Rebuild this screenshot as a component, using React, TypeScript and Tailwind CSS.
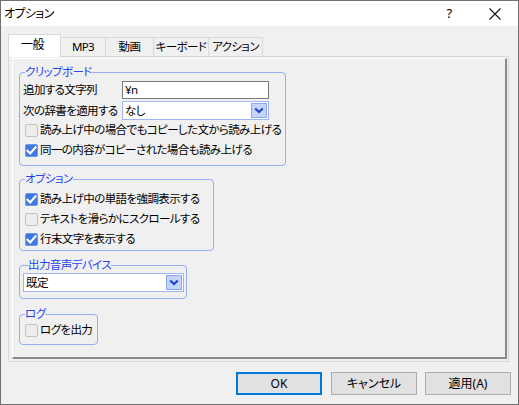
import React from "react";

const FONT = '"Noto Sans", "Noto Sans CJK JP", sans-serif';

function Check({ checked }: { checked?: boolean }) {
  if (checked) {
    return (
      <div className="w-[13px] h-[13px] rounded-[2px] bg-[#3f78e0] border border-[#6d98e8] flex items-center justify-center shrink-0">
        <svg width="11" height="11" viewBox="0 0 11 11">
          <path d="M1.5 5.8 L4.2 8.5 L9.6 2.2" fill="none" stroke="#ffffff" strokeWidth="2.2" strokeLinecap="square" />
        </svg>
      </div>
    );
  }
  return <div className="w-[13px] h-[13px] rounded-[2px] bg-[#ececec] border border-[#c3c3c3] shrink-0" />;
}

function CheckRow({ checked, label, h = "h-[20px]" }: { checked?: boolean; label: string; h?: string }) {
  return (
    <div className={`flex items-center gap-[2px] pl-[5px] ${h}`}>
      <Check checked={checked} />
      <span className="leading-[14px] whitespace-nowrap">{label}</span>
    </div>
  );
}

function Combo({ value, w }: { value: string; w: string }) {
  return (
    <div className={`${w} h-[19px] bg-white border border-[#9fb5f4] flex items-center pl-[2px] pr-[1px]`}>
      <span className="flex-1 leading-[14px]">{value}</span>
      <div className="w-[16px] h-[15px] bg-[#c4d5fb] border border-[#8ea8f0] flex items-center justify-center">
        <svg width="10" height="7" viewBox="0 0 10 7">
          <path d="M1.2 1.5 L5 5 L8.8 1.5" fill="none" stroke="#2343d0" strokeWidth="2.2" />
        </svg>
      </div>
    </div>
  );
}

function Group({ title, w, className = "", children }: { title: string; w: string; className?: string; children: React.ReactNode }) {
  return (
    <fieldset className={`${w} min-w-0 border border-[#95adf2] rounded-[4px] ${className}`}>
      <legend className="ml-[5px] px-0 text-[#2444f2] leading-[14px] whitespace-nowrap">{title}</legend>
      {children}
    </fieldset>
  );
}

export default function App() {
  return (
    <div
      className="w-[519px] h-[405px] border border-[#707070] bg-[#f0f0f0] flex flex-col text-[11.5px] tracking-[-0.6px] text-black overflow-hidden [font-feature-settings:'palt']"
      style={{ fontFamily: FONT }}
    >
      {/* Title bar */}
      <div className="h-[25px] bg-white flex items-center shrink-0">
        <span className="flex-1 pl-[3px] leading-[14px] text-[12px]">オプション</span>
        <div className="w-[46px] h-full flex items-center justify-center text-[13px]">?</div>
        <div className="w-[46px] h-full flex items-center justify-center">
          <svg width="12" height="12" viewBox="0 0 12 12">
            <path d="M0.5 0.5 L11.5 11.5 M11.5 0.5 L0.5 11.5" stroke="#111" strokeWidth="1.1" />
          </svg>
        </div>
      </div>

      {/* Body */}
      <div className="flex-1 flex flex-col px-[7px] pt-[8px]">
        {/* Tabs */}
        <div className="flex items-end h-[22px] whitespace-nowrap text-[11.5px]">
          <div className="w-[53px] h-[23px] -mb-[1px] relative z-10 bg-white border border-b-0 border-[#d9d9d9] flex items-center justify-center pb-[2px] pr-[4px] text-[12px]">
            一般
          </div>
          <div className="w-[45px] h-[19px] border-t border-r border-[#d9d9d9] bg-[#f0f0f0] flex items-center justify-center">MP3</div>
          <div className="w-[48px] h-[19px] border-t border-r border-[#d9d9d9] bg-[#f0f0f0] flex items-center justify-center">動画</div>
          <div className="w-[55px] h-[19px] border-t border-r border-[#d9d9d9] bg-[#f0f0f0] flex items-center justify-center">キーボード</div>
          <div className="w-[54px] h-[19px] border-t border-r border-[#d9d9d9] bg-[#f0f0f0] flex items-center justify-center">アクション</div>
        </div>

        {/* Panel */}
        <div className="w-[501px] h-[306px] border border-[#d9d9d9] pl-[3px] pt-[1px] pr-[1px] pb-[2px] flex">
          <div className="flex-1 border-l border-t border-white border-r-2 border-b-2 border-r-[#8a8a8a] border-b-[#8a8a8a] pl-[6px] pt-[6px] flex flex-col items-start">
            <Group title="クリップボード" w="w-[267px]" className="pt-[2px] pb-[5px]">
              <div className="flex items-center h-[18px] pl-[3px]">
                <span className="w-[99px] leading-[14px] whitespace-nowrap">追加する文字列</span>
                <div className="w-[147px] h-[18px] bg-white border border-[#7a7a7a] flex items-center pl-[2px] leading-[14px]">¥n</div>
              </div>
              <div className="flex items-center h-[19px] mt-[2px] pl-[3px]">
                <span className="w-[99px] leading-[14px] whitespace-nowrap">次の辞書を適用する</span>
                <Combo value="なし" w="w-[147px]" />
              </div>
              <CheckRow label="読み上げ中の場合でもコピーした文から読み上げる" />
              <CheckRow checked label="同一の内容がコピーされた場合も読み上げる" />
            </Group>

            <Group title="オプション" w="w-[195px]" className="mt-[6px] pt-[3px] pb-[1px]">
              <CheckRow checked label="読み上げ中の単語を強調表示する" />
              <CheckRow label="テキストを滑らかにスクロールする" />
              <CheckRow checked label="行末文字を表示する" />
            </Group>

            <Group title="出力音声デバイス" w="w-[168px]" className="mt-[7px] pt-[1px] pb-[6px] pl-[3px]">
              <Combo value="既定" w="w-[161px]" />
            </Group>

            <Group title="ログ" w="w-[79px]" className="mt-[8px] pb-[5px]">
              <CheckRow label="ログを出力" h="h-[18px]" />
            </Group>
          </div>
        </div>

        {/* Buttons */}
        <div className="flex justify-end mt-[10px] text-[12px] tracking-normal">
          <button className="w-[86px] h-[23px] bg-[#e1e1e1] border-2 border-[#0078d7] flex items-center justify-center leading-[14px]">OK</button>
          <button className="w-[86px] h-[23px] ml-[9px] bg-[#e1e1e1] border border-[#adadad] flex items-center justify-center leading-[14px]">キャンセル</button>
          <button className="w-[86px] h-[23px] ml-[8px] bg-[#e1e1e1] border border-[#adadad] flex items-center justify-center leading-[14px]">適用(A)</button>
        </div>
      </div>
    </div>
  );
}
